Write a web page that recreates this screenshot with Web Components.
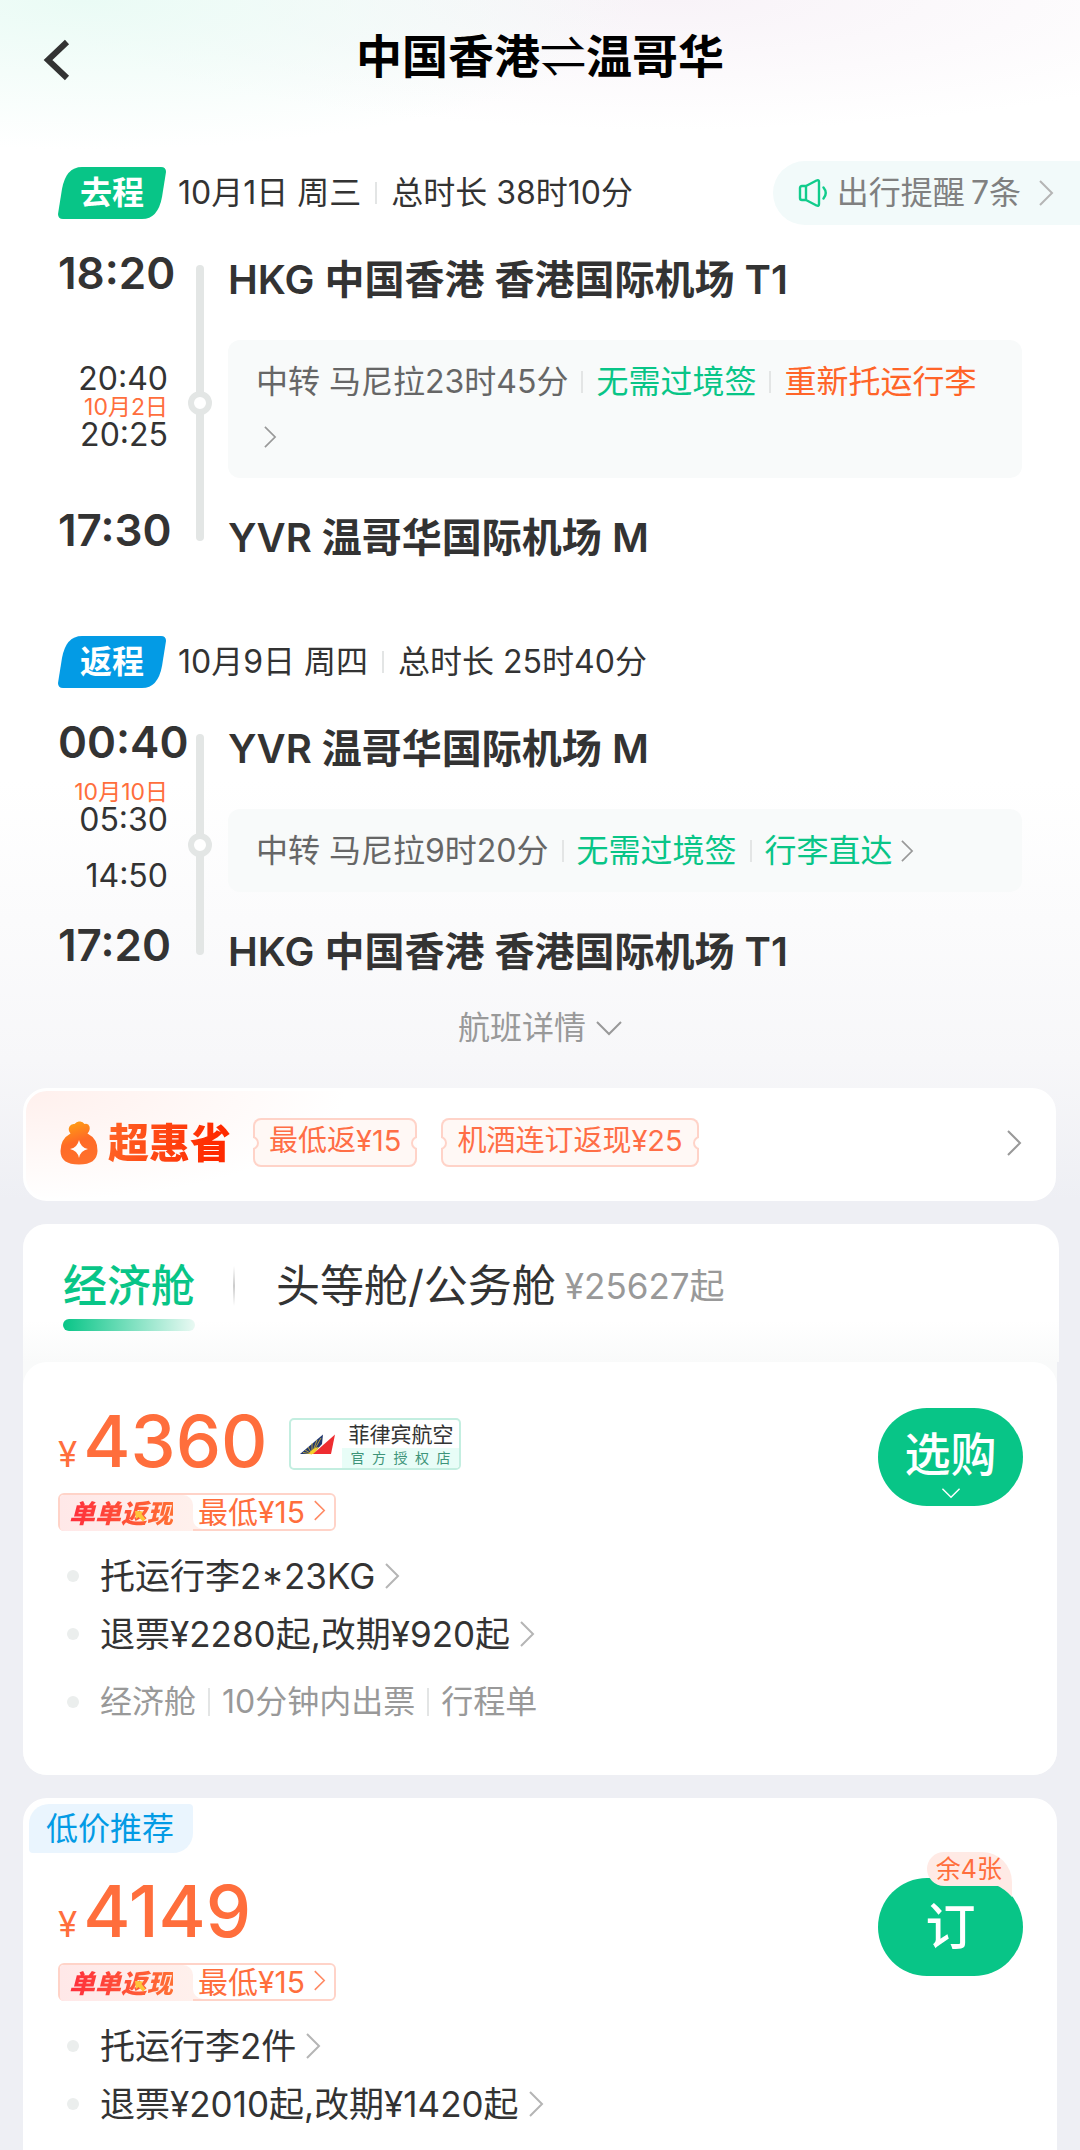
<!DOCTYPE html>
<html lang="zh-CN">
<head>
<meta charset="utf-8">
<meta name="viewport" content="width=device-width, initial-scale=1">
<title>中国香港⇌温哥华</title>
<style>
  html { background: #eeeff4; }
  body {
    margin: 0;
    font-family: Inter, "Noto Sans CJK SC", sans-serif;
    font-size: 32px;
    line-height: 48px;
    color: #333;
    overflow-x: hidden;
  }
</style>
</head>
<body>
<fare-page></fare-page>

<script>
const RESET = `
  *, *::before, *::after { box-sizing: border-box; }
  button { font: inherit; color: inherit; background: none; border: 0; padding: 0; margin: 0; text-align: inherit; }
  a { color: inherit; text-decoration: none; }
  h1, h2, h3, p, ul { margin: 0; padding: 0; font-weight: inherit; font-size: inherit; list-style: none; }
  svg { display: block; }
`;

function define(name, markup, setup) {
  const template = document.createElement('template');
  template.innerHTML = markup;
  customElements.define(name, class extends HTMLElement {
    connectedCallback() {
      if (this.shadowRoot) return;
      const root = this.attachShadow({ mode: 'open' });
      root.append(template.content.cloneNode(true));
      const style = document.createElement('style');
      style.textContent = RESET;
      root.prepend(style);
      if (setup) setup(this, root);
    }
  });
}

/* Thin arrow; dir="down" points downwards. */
define('ui-chevron', `
<style>
  :host { display: inline-block; flex: none; width: 14px; height: 26px; color: #b5b5b5; }
  :host([dir="down"]) { width: 26px; height: 14px; }
  svg { width: 100%; height: 100%; fill: none; stroke: currentColor; stroke-width: 2; overflow: visible; }
</style>
<svg aria-hidden="true"><path></path></svg>
`, (host, root) => {
  const down = host.getAttribute('dir') === 'down';
  root.querySelector('svg').setAttribute('viewBox', down ? '0 0 26 14' : '0 0 14 26');
  root.querySelector('path').setAttribute('d', down ? 'M1 1 13 13 25 1' : 'M1 1 13 13 1 25');
});

/* Hairline between inline pieces of text. */
define('ui-divider', `
<style>
  :host { display: inline-block; flex: none; width: 2px; height: 22px; background: #e3e5e5; }
  :host([tall]) { height: 28px; }
</style>`);

define('page-header', `
<style>
  :host { display: grid; grid-template-columns: 112px 1fr 112px; align-items: center; height: 112px; color: #000; }
  button { padding: 8px 0 0 42px; height: 112px; display: flex; align-items: center; }
  h1 { text-align: center; font-size: 46px; line-height: 64px; font-weight: 600; white-space: nowrap; }
  .swap { font-family: "DejaVu Sans Light", "DejaVu Sans", sans-serif; font-weight: 200; }
</style>
<button type="button" aria-label="返回">
  <svg width="28" height="42" viewBox="0 0 28 42" fill="none" stroke="#333" stroke-width="6"><path d="M25 3 6 21 25 39"/></svg>
</button>
<h1>中国香港<span class="swap">⇌</span>温哥华</h1>
`);

define('trip-notice', `
<style>
  :host { display: block; }
  a { display: flex; align-items: center; height: 64px; padding: 0 27px 0 25px; border-radius: 32px 0 0 32px; background: #f2fafa; color: #808080; white-space: nowrap; }
  svg { margin-right: 9px; }
  .n { margin-left: 6px; margin-right: 18px; }
</style>
<a href="#notice">
  <svg width="30" height="30" viewBox="0 0 30 30" fill="none" stroke="#12cc8c" stroke-width="2.4" stroke-linejoin="round" stroke-linecap="round"><path d="M8 8H4Q2 8 2 10V20Q2 22 4 22H8M8 8 18.500 2.500Q21 1.500 21 4V26Q21 28.500 18.500 27.500L8 22ZM8 8V22M25.500 9.500Q30 15 25.500 20.500"/></svg>
  <span>出行提醒</span><span class="n">7条</span>
  <ui-chevron></ui-chevron>
</a>
`);

/* One direction of the journey: badge, date, timeline, stops. */
define('trip-leg', `
<style>
  :host { display: block; }
  .head { display: flex; align-items: center; height: 64px; padding-left: 58px; white-space: nowrap; }
  .badge { position: relative; z-index: 0; width: 108px; height: 52px; line-height: 52px; text-align: center; color: #fff; font-weight: 600; margin-right: 12px; }
  .badge svg { position: absolute; inset: 0; z-index: -1; fill: var(--badge, #08c587); }
  .date { display: flex; align-items: center; gap: 14px; margin-right: auto; }
  .body { display: flex; padding: 0 58px; }
  .times { width: 128px; flex: none; padding-top: 20px; margin-right: 10px; }
  .stops { flex: 1; min-width: 0; margin-left: 24px; padding-top: 27px; display: flex; flex-direction: column; gap: 32px; }
  .rail { width: 8px; flex: none; margin: 40px 0 25px; border-radius: 4px; background: #e3e6e5; display: flex; justify-content: center; align-items: center; }
  .rail i { flex: none; width: 24px; height: 24px; border: 6px solid #e3e6e5; border-radius: 50%; background: #fff; }
</style>
<div class="head">
  <h2 class="badge"><svg width="108" height="52" viewBox="0 0 108 52"><path d="M24 0H103Q108 0 108 5L104 30Q100 52 84 52H5Q0 52 0 47L4 22Q8 0 24 0Z"/></svg><slot name="badge"></slot></h2>
  <div class="date"><slot name="date"></slot><ui-divider></ui-divider><slot name="total"></slot></div>
  <slot name="notice"></slot>
</div>
<div class="body">
  <div class="times"><slot name="times"></slot></div>
  <div class="rail"><i></i></div>
  <div class="stops"><slot name="stop"></slot></div>
</div>
`);

define('leg-times', `
<style>
  :host { display: flex; flex-direction: column; white-space: nowrap; }
  ::slotted(b) { font-size: 44px; line-height: 56px; font-weight: 600; }
  .mid { display: flex; flex-direction: column; align-items: flex-end; padding: var(--mid-pad, 62px 18px 51px 0); line-height: 32px; }
</style>
<slot name="from"></slot>
<div class="mid"><slot></slot></div>
<slot name="to"></slot>
`);

define('day-shift', `
<style>:host { display: block; font-size: 23px; line-height: 24px; color: #ff6e3c; }</style>
<slot></slot>`);

define('transfer-box', `
<style>
  :host { display: block; }
  a { display: flex; flex-wrap: wrap; align-items: center; padding: 14px 28px; border-radius: 12px; background: #f8fafa; color: #666; line-height: 55px; }
  ui-divider { margin: 0 13px; }
  .good { color: #08c587; }
  .warn { color: #ff6428; }
  .go { display: flex; align-items: center; height: 55px; margin-left: 8px; }
  .go ui-chevron { width: 12px; height: 22px; color: #999; }
</style>
<a href="#transfer"></a>
`, (host, root) => {
  const link = root.querySelector('a');
  link.innerHTML = `<span>${host.getAttribute('stay')}</span><ui-divider></ui-divider>` +
    `<span class="good">${host.getAttribute('visa')}</span><ui-divider></ui-divider>` +
    `<span class="${host.getAttribute('tone')}">${host.getAttribute('bags')}</span><span class="go"><ui-chevron></ui-chevron></span>`;
});

define('flight-summary', `
<style>
  :host { display: block; padding-top: 49px; }
  h3 { font-size: 40px; line-height: 56px; font-weight: 600; white-space: nowrap; }
  trip-leg + trip-leg { margin-top: 64px; }
  .back { --badge: #039be5; }
  .back leg-times { --mid-pad: 10px 18px 25px 0; }
  .gap { height: 24px; }
  button { display: flex; align-items: center; gap: 10px; margin: 24px auto 0; color: #999; }
  ui-chevron { color: #999; }
</style>
<trip-leg>
  <span slot="badge">去程</span>
  <span slot="date">10月1日 周三</span>
  <span slot="total">总时长 38时10分</span>
  <trip-notice slot="notice"></trip-notice>
  <leg-times slot="times">
    <b slot="from">18:20</b>
    <span>20:40</span><day-shift>10月2日</day-shift><span>20:25</span>
    <b slot="to">17:30</b>
  </leg-times>
  <h3 slot="stop">HKG 中国香港 香港国际机场 T1</h3>
  <transfer-box slot="stop" stay="中转 马尼拉23时45分" visa="无需过境签" bags="重新托运行李" tone="warn"></transfer-box>
  <h3 slot="stop">YVR 温哥华国际机场 M</h3>
</trip-leg>
<trip-leg class="back">
  <span slot="badge">返程</span>
  <span slot="date">10月9日 周四</span>
  <span slot="total">总时长 25时40分</span>
  <leg-times slot="times">
    <b slot="from">00:40</b>
    <day-shift>10月10日</day-shift><span>05:30</span><div class="gap"></div><span>14:50</span>
    <b slot="to">17:20</b>
  </leg-times>
  <h3 slot="stop">YVR 温哥华国际机场 M</h3>
  <transfer-box slot="stop" stay="中转 马尼拉9时20分" visa="无需过境签" bags="行李直达" tone="good"></transfer-box>
  <h3 slot="stop">HKG 中国香港 香港国际机场 T1</h3>
</trip-leg>
<button type="button">航班详情<ui-chevron dir="down"></ui-chevron></button>
`);

/* Ticket-shaped label with a notch in each short side. */
define('coupon-tag', `
<style>
  :host { display: block; position: relative; overflow: hidden; height: 49px; padding: 0 16px; line-height: 45px; font-size: 29px; color: #ff6e46; border-radius: 8px; background: #fff8f5; box-shadow: inset 0 0 0 2px #ffd3c8; white-space: nowrap; }
  :host::before, :host::after { content: ""; position: absolute; top: 18px; width: 14px; height: 14px; border: 2px solid #ffd3c8; border-radius: 50%; background: #fffdfc; }
  :host::before { left: -8px; }
  :host::after { right: -8px; }
</style>
<slot></slot>`);

define('promo-bar', `
<style>
  :host { display: block; }
  a { display: flex; align-items: center; height: 113px; padding: 0 32px 4px 34px; border: 3px solid #fff; border-radius: 24px; background: radial-gradient(ellipse 320px 110px at 0 0, #fff0ed, #fff) #fff; }
  .name { margin: 0 22px 0 10px; font-size: 41px; font-weight: 900; background: linear-gradient(100deg, #ff6426, #ff2a00 85%); -webkit-background-clip: text; background-clip: text; color: transparent; }
  coupon-tag + coupon-tag { margin-left: 24px; }
  ui-chevron { margin-left: auto; color: #999; }
</style>
<a href="#promo">
  <svg width="38" height="44" viewBox="0 0 38 44">
    <defs><linearGradient id="bag" x1="0" y1="0" x2=".3" y2="1"><stop offset="0" stop-color="#ffa80f"/><stop offset=".55" stop-color="#ff6b26"/><stop offset="1" stop-color="#ff702c"/></linearGradient></defs>
    <path fill="url(#bag)" d="M10.500 12.500Q7.500 9 9.500 5.500Q11 2.500 14.500 3Q17 0 19.500 0.500Q22.500 0 24.500 3Q28.500 2 29.500 5.500Q30.500 9 27.500 12.500Q38 18 37.500 30Q37 43.500 19 43.500Q.500 43.500 .500 30Q.500 18 10.500 12.500Z"/>
    <path fill="#fff" d="M19 19Q20.500 26.500 28 28Q20.500 29.500 19 37Q17.500 29.500 10 28Q17.500 26.500 19 19Z"/>
  </svg>
  <strong class="name">超惠省</strong>
  <coupon-tag>最低返¥15</coupon-tag>
  <coupon-tag>机酒连订返现¥25</coupon-tag>
  <ui-chevron></ui-chevron>
</a>
`);

define('cabin-tabs', `
<style>
  :host { display: flex; align-items: center; height: 138px; padding: 0 40px; font-size: 44px; line-height: 60px; white-space: nowrap; border-radius: 24px 24px 0 0; background: linear-gradient(#fff 70%, #f9fafa); }
  button { display: flex; align-items: center; height: 138px; padding-bottom: 14px; }
  .on { position: relative; color: #08c587; font-weight: 500; }
  .on::after { content: ""; position: absolute; left: 0; right: 0; top: 95px; height: 12px; border-radius: 6px; background: linear-gradient(90deg, #08c587, #e9f9f3); }
  .bar { width: 2px; height: 40px; margin: 0 41px 14px 38px; background: linear-gradient(#fff, #ccc, #fff); }
  small { margin-left: 9px; font-size: 35px; color: #999; }
</style>
<button type="button" class="on">经济舱</button>
<span class="bar"></span>
<button type="button">头等舱/公务舱<small>¥25627起</small></button>
`);

define('airline-badge', `
<style>
  :host { display: flex; align-items: center; width: 172px; height: 52px; border: 2px solid #c3eee0; border-radius: 5px; background: #fff; overflow: hidden; }
  svg { margin: 0 6px 0 9px; flex: none; }
  .txt { flex: 1; height: 48px; }
  .nm { padding-left: 6px; height: 28px; line-height: 30px; font-size: 21px; white-space: nowrap; }
  .sub { display: block; height: 20px; line-height: 19px; padding: 0 9px 0 8px; font-size: 14px; color: #3e9479; background: #e8fdf7; text-align-last: justify; }
</style>
<svg width="36" height="22" viewBox="0 0 36 22">
  <path fill="#22386f" d="M0 21 23 1.500 22 11 13 21Z"/>
  <path d="M12 21 3 19.500M12 21 8 14M12 21 12 10M12 21 17 7M12 21 21 5M12 21 5 17" stroke="#f5cf2a" stroke-width=".7"/>
  <path fill="#f5cf2a" d="M9 21Q12 15 19 14L14 21Z"/>
  <path fill="#ee2d31" d="M13 21 35 1.500 31 21Z"/>
</svg>
<div class="txt"><div class="nm">菲律宾航空</div><span class="sub">官方授权店</span></div>
`);

define('cashback-tag', `
<style>
  :host { display: block; width: max-content; }
  a { display: flex; height: 38px; line-height: 34px; border: 2px solid #ffd3c8; border-radius: 6px; background: #fff0ec; white-space: nowrap; color: #ff6e3c; }
  .mix { background: linear-gradient(#fff 50%, #fff0ec 50%); border-radius: 4px 0 0 4px; }
  .l { display: block; position: relative; padding: 0 20px 0 9px; background: linear-gradient(90deg, #ffe8e8, #fff0ec); border-radius: 4px 10px 0 4px; }
  strong { font-size: 26px; font-weight: 900; font-style: italic; background: linear-gradient(90deg, #ff2d3c, #ff7034); -webkit-background-clip: text; background-clip: text; color: transparent; }
  .l svg { position: absolute; left: 74px; top: 15px; }
  .r { display: flex; align-items: center; gap: 9px; padding: 0 9px 0 5px; font-size: 30px; background: #fff; border-radius: 0 4px 4px 10px; }
  ui-chevron { color: #ff8a64; width: 11px; height: 21px; margin-top: -4px; }
</style>
<a href="#cashback">
  <span class="mix"><span class="l"><strong>单单返现</strong><svg width="12" height="12" viewBox="0 0 12 12"><path fill="#ffc53a" d="M1 1 9 1.500 7.500 4 11.500 9 9 11.500 4.500 7 2 9Z"/></svg></span></span>
  <span class="r">最低¥15<ui-chevron></ui-chevron></span>
</a>
`);

define('fare-rule', `
<style>
  :host { display: flex; align-items: center; gap: 10px; padding-left: 9px; font-size: 35px; line-height: 58px; white-space: nowrap; }
  :host([muted]) { font-size: 32px; line-height: 48px; color: #999; gap: 12px; }
  i { width: 12px; height: 12px; border-radius: 50%; background: #ebeeed; margin-right: 11px; }
  :host([muted]) i { margin-right: 9px; }
</style>
<i></i><slot></slot>`);

define('buy-button', `
<style>
  :host { display: block; position: relative; }
  button { display: flex; flex-direction: column; align-items: center; justify-content: center; width: 145px; height: 98px; border-radius: 49px; background: #08c587; color: #fff; font-size: 46px; line-height: 60px; font-weight: 500; }
  :host([left]) button { font-size: 50px; }
  .left { position: absolute; right: 11px; top: -26px; height: 34px; padding: 0 10px 0 9px; border-radius: 17px 30px 0 17px; background: #ffeae5; color: #ff6e3c; font-size: 25px; line-height: 34px; white-space: nowrap; }
  .tail { position: absolute; right: 11px; top: 7px; width: 16px; height: 13px; }
  :host(:not([left])) .left, :host(:not([left])) .tail, :host(:not([more])) ui-chevron { display: none; }
  ui-chevron { color: #fff; width: 20px; height: 10px; margin: 4px 0 -8px; }
</style>
<button type="button"><slot></slot><ui-chevron dir="down"></ui-chevron></button>
<span class="left"></span>
<svg class="tail" viewBox="0 0 16 13"><path fill="#ffeae5" d="M0 0H16V12Q9 4 0 0Z"/></svg>
`, (host, root) => { root.querySelector('.left').textContent = host.getAttribute('left') || ''; });

define('fare-offer', `
<style>
  :host { display: flow-root; background: #fff; border-radius: 24px; padding-bottom: 49px; }
  .flag { display: flex; height: 54px; margin: 6px 0 0 6px; }
  .flag slot { display: block; width: max-content; padding: 0 19px 0 17px; height: 49px; line-height: 49px; color: #039be5; background: #eaf5fe; border-radius: 20px 4px 20px 4px; }
  :host(:not([flagged])) .flag { display: none; }
  .row { display: flex; justify-content: space-between; padding: 0 34px 0 35px; }
  :host(:not([flagged])) .row { padding-top: 26px; }
  .price { display: flex; align-items: baseline; color: #ff6e3c; line-height: 76px; padding-top: 15px; }
  .price small { font-size: 35px; margin-right: 6px; }
  .price b { font-size: 72px; font-weight: 500; margin-right: 22px; }
  .top { display: flex; align-items: center; }
  ::slotted([slot="airline"]) { margin-top: 8px; }
  cashback-tag { margin: 1px 0 16px; }
  ::slotted([slot="buy"]) { margin-top: 20px; }
  ::slotted([muted]) { margin-top: 15px; }
</style>
<div class="flag"><slot name="flag"></slot></div>
<div class="row">
  <div>
    <div class="top"><div class="price"><small>¥</small><b><slot name="price"></slot></b></div><slot name="airline"></slot></div>
    <cashback-tag></cashback-tag>
    <slot></slot>
  </div>
  <slot name="buy"></slot>
</div>
`);

define('fare-page', `
<style>
  :host { display: block; overflow: hidden; background:
    radial-gradient(ellipse 560px 150px at 8% 0, #eafbf5, #eafbf500),
    radial-gradient(ellipse 620px 130px at 62% 0, #f8f3f8, #f8f3f800),
    linear-gradient(#fff, #fff 780px, #f7f7f9 1060px, #eeeff4 1200px); }
  main { display: block; }
  promo-bar { margin: 36px 24px 0 23px; }
  .list { margin: 23px 23px 0; }
  .cabin { background: #f9fafa; border-radius: 24px; }
  .cabin cabin-tabs { margin-right: -2px; }
  .second { margin-top: 23px; }
</style>
<page-header></page-header>
<main>
  <flight-summary></flight-summary>
  <promo-bar></promo-bar>
  <div class="list">
    <div class="cabin">
      <cabin-tabs></cabin-tabs>
      <fare-offer>
        <span slot="price">4360</span>
        <airline-badge slot="airline"></airline-badge>
        <fare-rule>托运行李2*23KG<ui-chevron></ui-chevron></fare-rule>
        <fare-rule>退票¥2280起,改期¥920起<ui-chevron></ui-chevron></fare-rule>
        <fare-rule muted>经济舱<ui-divider tall></ui-divider>10分钟内出票<ui-divider tall></ui-divider>行程单</fare-rule>
        <buy-button slot="buy" more>选购</buy-button>
      </fare-offer>
    </div>
    <fare-offer class="second" flagged>
      <span slot="flag">低价推荐</span>
      <span slot="price">4149</span>
      <fare-rule>托运行李2件<ui-chevron></ui-chevron></fare-rule>
      <fare-rule>退票¥2010起,改期¥1420起<ui-chevron></ui-chevron></fare-rule>
      <buy-button slot="buy" left="余4张">订</buy-button>
    </fare-offer>
  </div>
</main>
`);
</script>
</body>
</html>
